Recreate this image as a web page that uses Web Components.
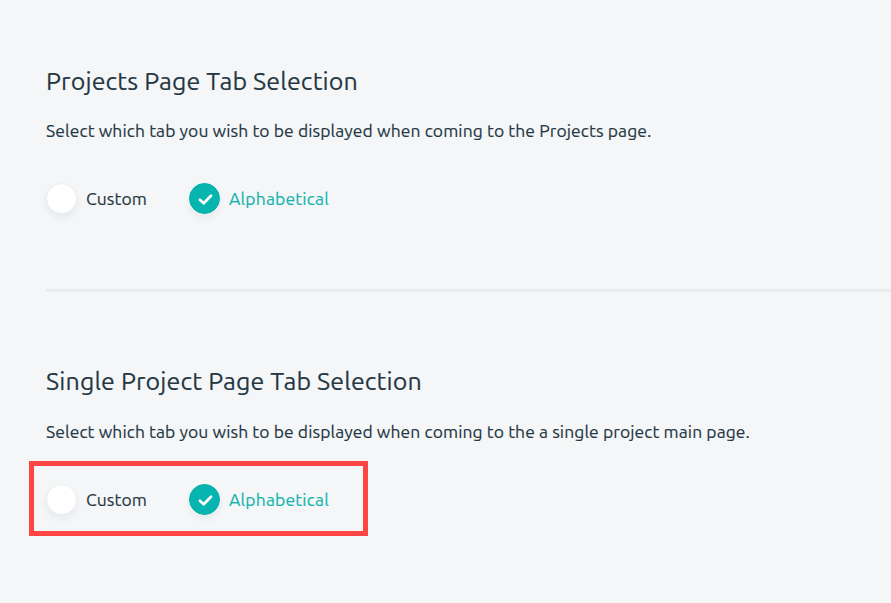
<!DOCTYPE html>
<html lang="en"><head><meta charset="utf-8"><title>Tab selection</title>
<style>html,body{margin:0;height:100%;overflow:hidden;background:#f4f6f8}</style></head><body>
<settings-page></settings-page>
<script>
class FitText extends HTMLElement{
 connectedCallback(){
  const w=this.getAttribute('w'),s=+this.getAttribute('size'),h=s>20?36:26;
  const r=this.attachShadow({mode:'open'});
  r.innerHTML=`<style>:host{display:block;width:${w}px;height:${h}px;font-size:${s}px;line-height:${h}px;white-space:nowrap;-webkit-text-stroke:.15px currentColor}span{display:inline-block}</style><span><slot></slot></span>`;
  const el=r.querySelector('span');
  const n=this.textContent.length;
  el.style.letterSpacing=((w-el.getBoundingClientRect().width)/n)+'px';
 }
}
customElements.define('fit-text',FitText);
class RadioOption extends HTMLElement{
 connectedCallback(){
  const on=this.hasAttribute('checked');
  this.attachShadow({mode:'open'}).innerHTML=`<style>:host{display:flex;align-items:center;gap:9px;color:${on?'#14b4ac':'#253743'}}
  i{box-sizing:border-box;flex:none;width:31px;height:31px;border-radius:50%;display:grid;place-items:center;background:${on?'#06b5af':'#fff'};border:1px solid ${on?'#06aea8':'#eceeef'};box-shadow:0 4px 7px rgba(40,60,80,.06)}svg{margin:1px 0 0 2px}</style>
  <i>${on?'<svg width="17" height="15" viewBox="0 0 17 15" fill="none" stroke="#fff" stroke-width="2.7" stroke-linecap="round" stroke-linejoin="round"><path d="M2.9 7.8 6.7 11.3 14 3.8"/></svg>':''}</i><slot></slot>`;
 }
}
customElements.define('radio-option',RadioOption);
class SettingsSection extends HTMLElement{
 connectedCallback(){
  this.attachShadow({mode:'open'}).innerHTML=`<style>:host{display:block;padding-left:46px}.d{margin-top:19px}:host([marked]) .d{margin-top:20px}.o{display:flex;gap:42px;width:max-content;margin-top:39px}:host([marked]) .o{margin:16px 0 0 -17px;padding:18px 34px 16px 12px;border:5px solid #ff4444}</style><slot name="title"></slot><div class="d"><slot name="description"></slot></div><div class="o"><slot></slot></div>`;
 }
}
customElements.define('settings-section',SettingsSection);
class SettingsPage extends HTMLElement{
 connectedCallback(){
  const opts='<radio-option><fit-text w="61" size="17.5">Custom</fit-text></radio-option><radio-option checked><fit-text w="100" size="17.5">Alphabetical</fit-text></radio-option>';
  this.attachShadow({mode:'open'}).innerHTML=`<style>:host{display:flex;flex-direction:column;padding-top:63px;font-family:Ubuntu,"Noto Sans",sans-serif;color:#253743}hr{border:0;height:3px;background:#e9ebed;margin:75px 0 71px 46px;width:845px}</style>
  <settings-section><fit-text slot="title" w="312" size="25">Projects Page Tab Selection</fit-text><fit-text slot="description" w="605.5" size="17.5">Select which tab you wish to be displayed when coming to the Projects page.</fit-text>${opts}</settings-section><hr>
  <settings-section marked><fit-text slot="title" w="376" size="25">Single Project Page Tab Selection</fit-text><fit-text slot="description" w="704" size="17.5">Select which tab you wish to be displayed when coming to the a single project main page.</fit-text>${opts}</settings-section>`;
 }
}
customElements.define('settings-page',SettingsPage);
</script></body></html>
